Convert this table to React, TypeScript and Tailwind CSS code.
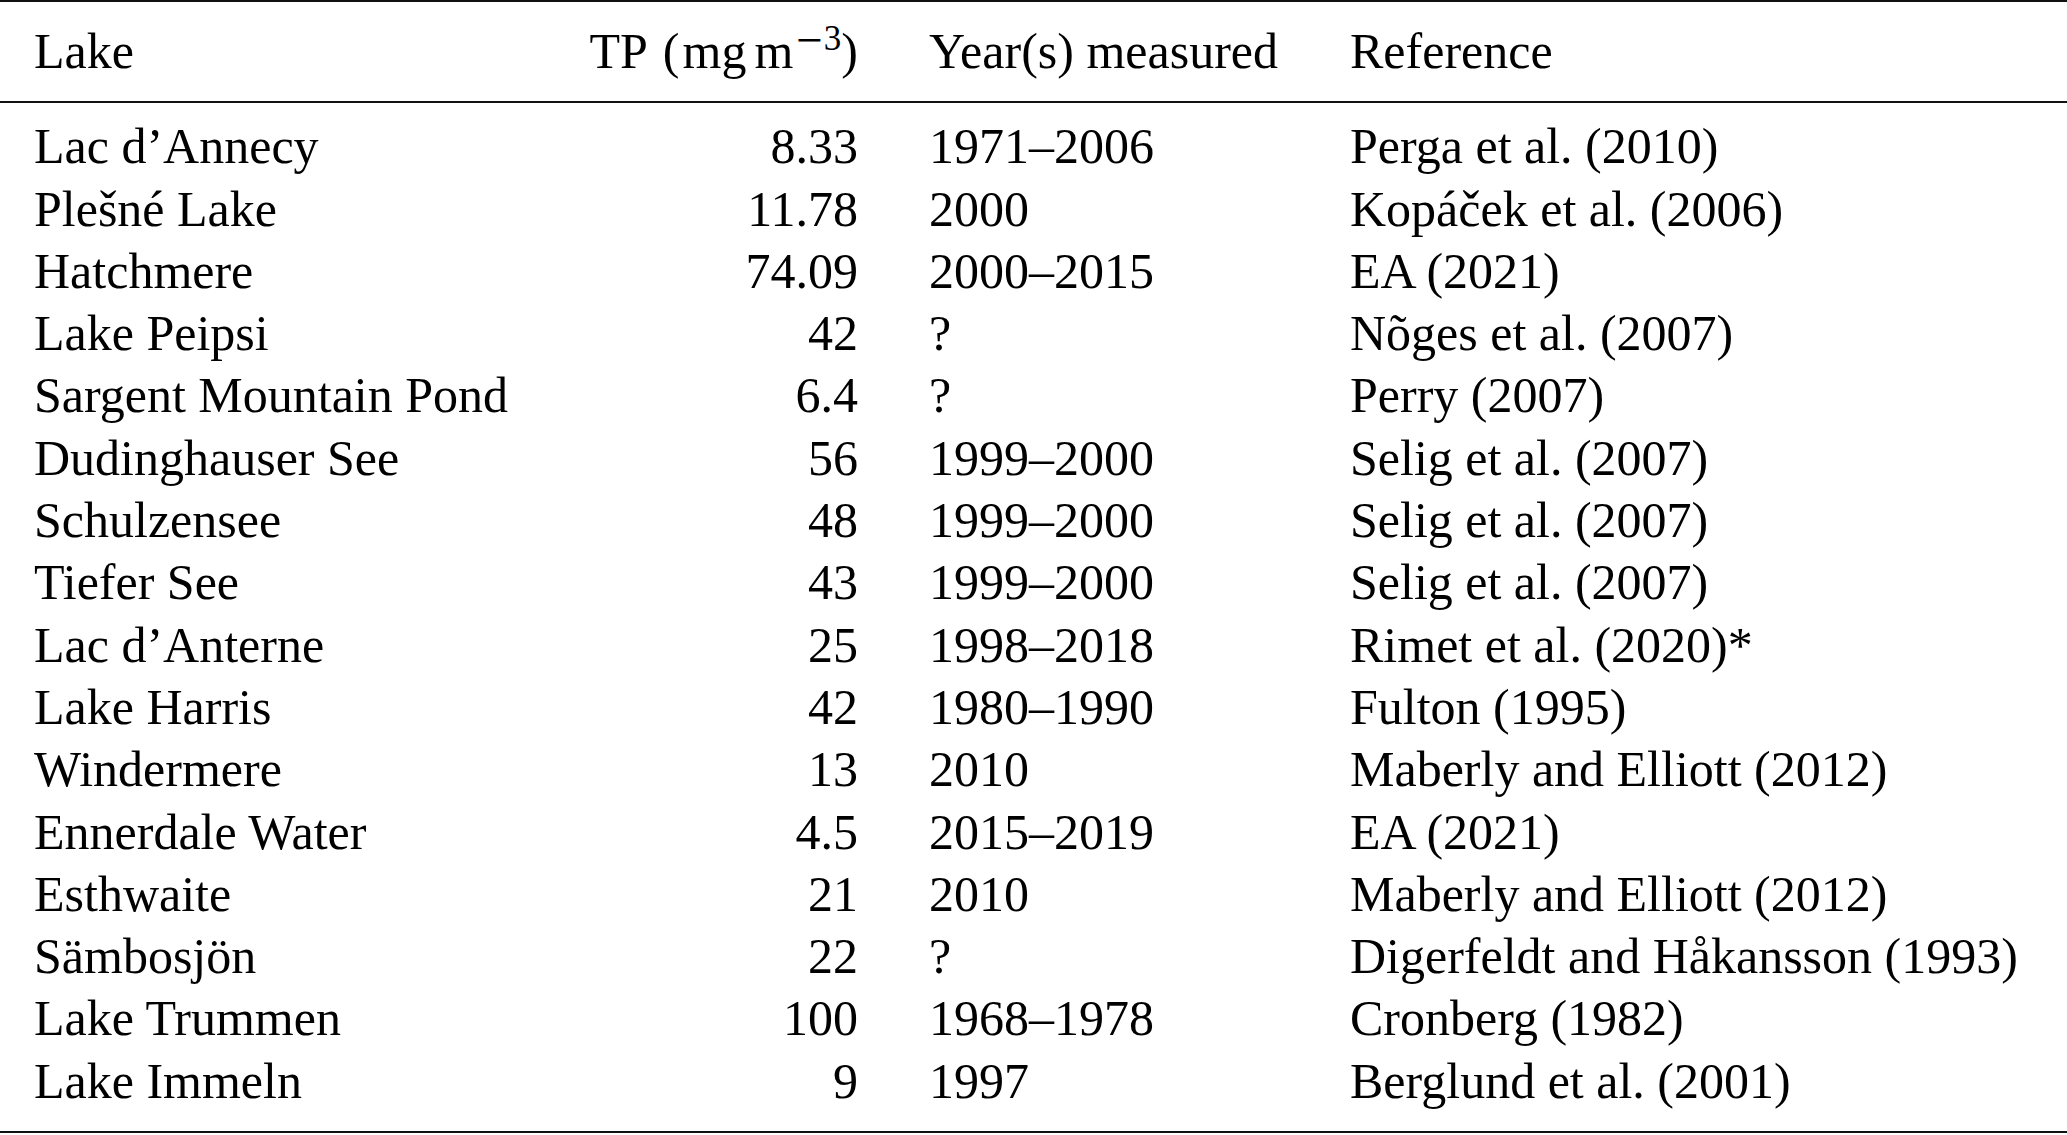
import React from "react";

const rows: [string, string, string, string][] = [
  ["Lac d\u2019Annecy", "8.33", "1971\u20132006", "Perga et al. (2010)"],
  ["Ple\u0161n\u00e9 Lake", "11.78", "2000", "Kop\u00e1\u010dek et al. (2006)"],
  ["Hatchmere", "74.09", "2000\u20132015", "EA (2021)"],
  ["Lake Peipsi", "42", "?", "N\u00f5ges et al. (2007)"],
  ["Sargent Mountain Pond", "6.4", "?", "Perry (2007)"],
  ["Dudinghauser See", "56", "1999\u20132000", "Selig et al. (2007)"],
  ["Schulzensee", "48", "1999\u20132000", "Selig et al. (2007)"],
  ["Tiefer See", "43", "1999\u20132000", "Selig et al. (2007)"],
  ["Lac d\u2019Anterne", "25", "1998\u20132018", "Rimet et al. (2020)*"],
  ["Lake Harris", "42", "1980\u20131990", "Fulton (1995)"],
  ["Windermere", "13", "2010", "Maberly and Elliott (2012)"],
  ["Ennerdale Water", "4.5", "2015\u20132019", "EA (2021)"],
  ["Esthwaite", "21", "2010", "Maberly and Elliott (2012)"],
  ["S\u00e4mbosj\u00f6n", "22", "?", "Digerfeldt and H\u00e5kansson (1993)"],
  ["Lake Trummen", "100", "1968\u20131978", "Cronberg (1982)"],
  ["Lake Immeln", "9", "1997", "Berglund et al. (2001)"],
];

function Row({ cells }: { cells: [React.ReactNode, React.ReactNode, React.ReactNode, React.ReactNode] }) {
  return (
    <div className="flex h-[62.3px] items-baseline whitespace-nowrap leading-[62.3px]">
      <div className="w-[520px] pl-[34px]">{cells[0]}</div>
      <div className="w-[338px] text-right">{cells[1]}</div>
      <div className="ml-[71px] w-[421px]">{cells[2]}</div>
      <div className="flex-1">{cells[3]}</div>
    </div>
  );
}

export default function App() {
  return (
    <div
      className="w-[2067px] h-[1135px] overflow-hidden bg-white text-black text-[50px]"
      style={{ fontFamily: '"Liberation Serif", "Times New Roman", serif' }}
    >
      <div className="border-t-[2px] border-[#111]" />
      <div className="pt-[18px] pb-[19px]">
        <Row
          cells={[
            "Lake",
            <span>
              TP<span className="ml-[15px]">(</span>
              <span className="ml-[3px]">mg</span>
              <span className="ml-[8px]">m</span>
              <span className="relative -top-[18px] ml-[3px] text-[35px] leading-none">
                <span className="relative top-[6px] text-[47px] leading-none">{"\u2212"}</span>
                <span className="ml-[1px]">3</span>
              </span>
              )
            </span>,
            "Year(s) measured",
            "Reference",
          ]}
        />
      </div>
      <div className="border-t-[2px] border-[#111]" />
      <div className="pt-[12px] pb-[19px]">
        {rows.map((r, i) => (
          <Row key={i} cells={r} />
        ))}
      </div>
      <div className="border-t-[2px] border-[#111]" />
    </div>
  );
}
